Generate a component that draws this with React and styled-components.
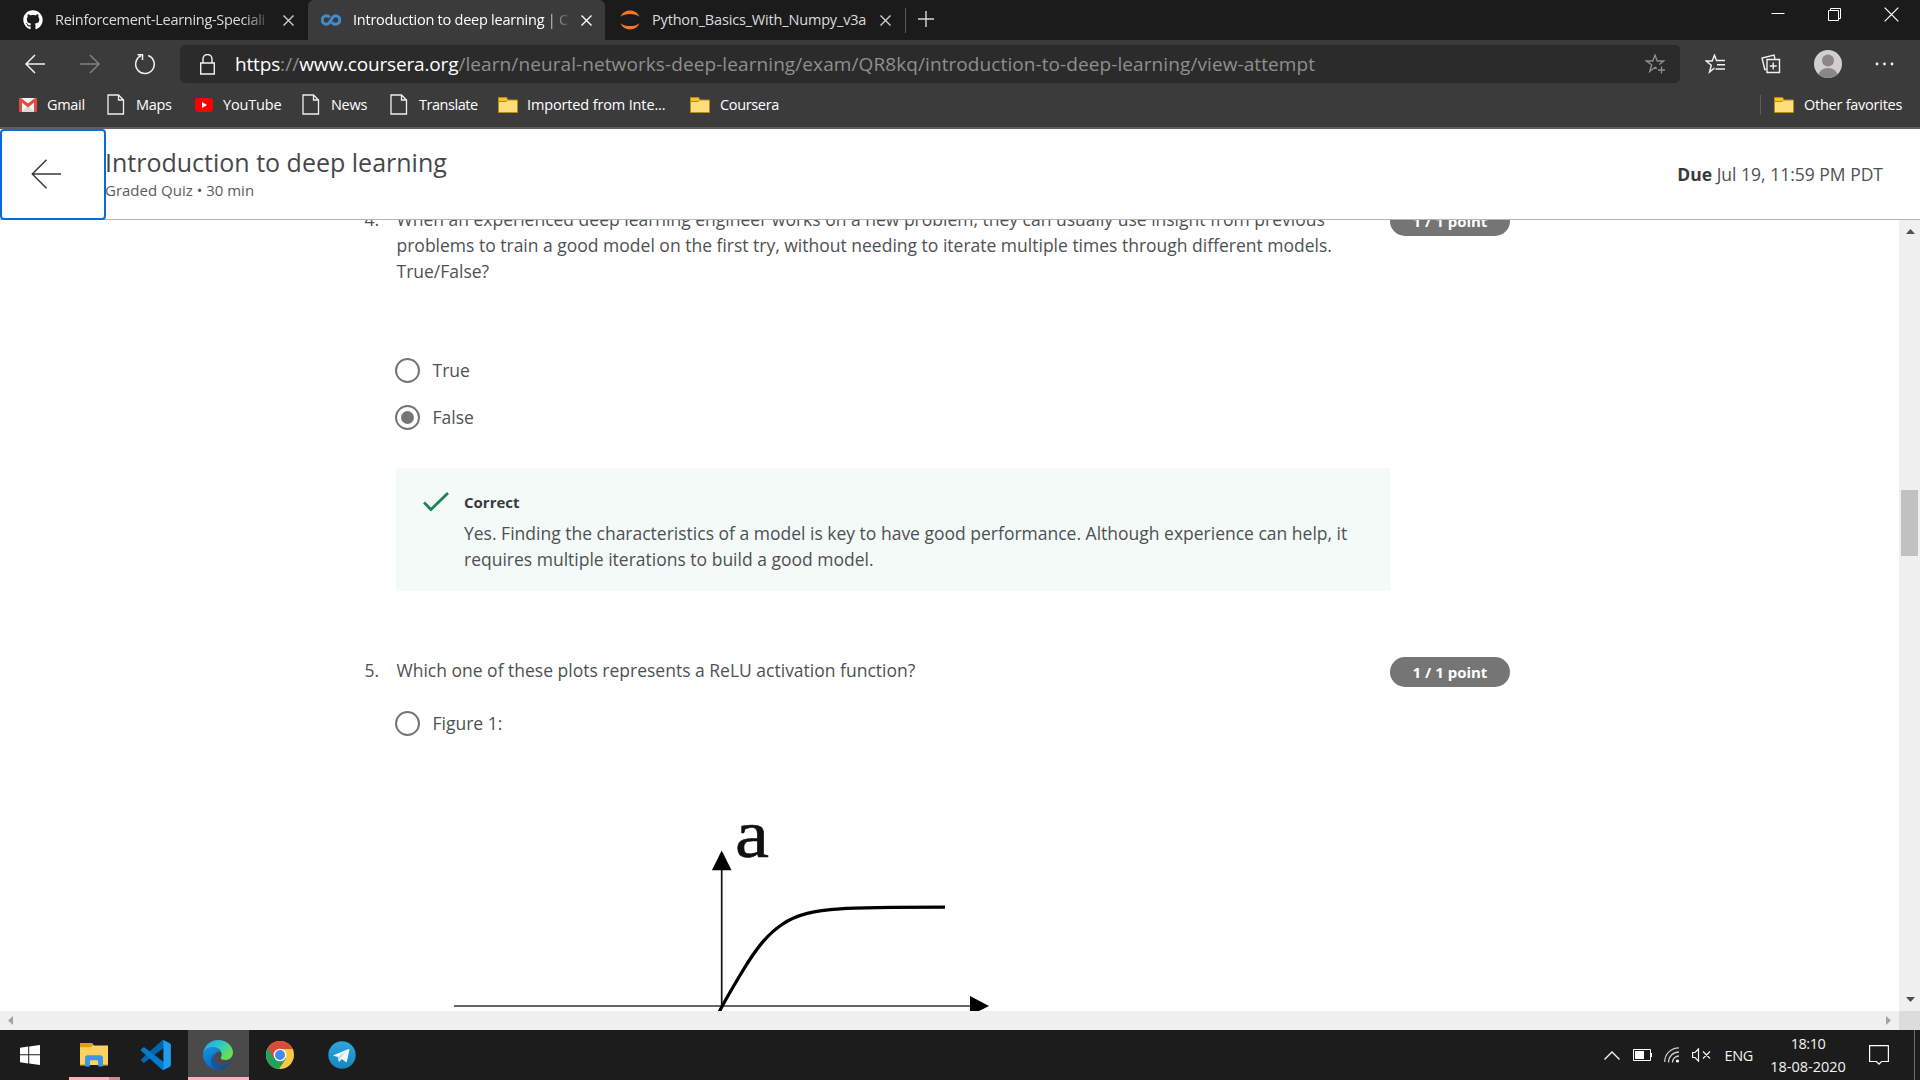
import React from "react";
import styled, { createGlobalStyle } from "styled-components";
import { FaGithub } from "react-icons/fa";

const ui = `"Open Sans", "Noto Sans", sans-serif`;
const page = `"Open Sans", "Noto Sans", sans-serif`;

const Global = createGlobalStyle`
  * { box-sizing: border-box; }
  html, body { margin: 0; padding: 0; overflow: hidden; background: #1c1c1c; }
  svg { display: block; flex: none; }
`;

const Screen = styled.div`
  width: 1920px;
  height: 1080px;
  display: flex;
  flex-direction: column;
  overflow: hidden;
  font-family: ${ui};
  background: #fff;
`;

/* ---------- browser chrome ---------- */
const TabStrip = styled.div`
  height: 40px;
  flex: none;
  display: flex;
  background: #1b1b1b;
`;
const TabBox = styled.div`
  width: ${(p) => p.$w}px;
  height: 40px;
  padding-left: ${(p) => p.$pad}px;
  display: flex;
  align-items: center;
  flex: none;
  background: ${(p) => (p.$active ? "#3b3b3b" : "#1b1b1b")};
  border-radius: ${(p) => (p.$active ? "6px 6px 0 0" : "0")};
`;
const Favicon = styled.div`
  width: 20px;
  margin-right: ${(p) => p.$gap || 12}px;
  flex: none;
`;
const TabTitle = styled.div`
  width: ${(p) => p.$w}px;
  flex: none;
  overflow: hidden;
  white-space: nowrap;
  font-size: 14.5px;
  line-height: 40px;
  height: 40px;
  letter-spacing: ${(p) => p.$ls}px;
  color: ${(p) => (p.$active ? "#fff" : "#dcdcdc")};
  mask-image: ${(p) => (p.$fade ? "linear-gradient(90deg, #000 calc(100% - 30px), transparent)" : "none")};
`;
const TabClose = styled.div`
  margin-left: ${(p) => p.$ml}px;
`;
const StripDivider = styled.div`
  width: 1px;
  height: 25px;
  margin-top: 8px;
  background: #5a5a5a;
`;
const NewTab = styled.div`
  margin: 10px 0 0 11px;
`;
const WindowButtons = styled.div`
  margin-left: auto;
  padding: 7px 21px 0 0;
  display: flex;
  gap: 42px;
`;
const MinimizeSlot = styled.div`
  margin-right: 1px;
`;

const Toolbar = styled.div`
  height: 48px;
  flex: none;
  display: flex;
  align-items: center;
  background: #3b3b3b;
`;
const NavButtons = styled.div`
  width: 180px;
  padding-left: 25px;
  display: flex;
  align-items: center;
  gap: 35px;
`;
const AddressBar = styled.div`
  width: 1500px;
  height: 38px;
  padding: 0 14px 0 20px;
  border-radius: 5px;
  background: #2b2b2b;
  display: flex;
  align-items: center;
`;
const Url = styled.div`
  margin-left: 20px;
  flex: 1;
  font-size: 19px;
  line-height: 38px;
  height: 38px;
  letter-spacing: ${(p) => p.$ls}px;
  color: #8f8f8f;
  white-space: nowrap;
`;
const UrlStrong = styled.span`
  color: #fff;
  letter-spacing: -0.16px;
`;
const ToolIcons = styled.div`
  padding-left: 25px;
  display: flex;
  align-items: center;
`;
const ToolIcon = styled.div`
  margin-right: ${(p) => p.$mr}px;
`;

const Favorites = styled.div`
  height: 41px;
  flex: none;
  padding: 0 17px 6px 19px;
  display: flex;
  align-items: center;
  background: #3b3b3b;
  border-bottom: 2px solid #5f5f5f;
`;
const Favorite = styled.div`
  display: flex;
  align-items: center;
  width: ${(p) => p.$w}px;
  flex: none;
`;
const FavIcon = styled.div`
  width: ${(p) => p.$w}px;
  flex: none;
`;
const FavLabel = styled.div`
  font-size: 14.5px;
  line-height: 20px;
  white-space: nowrap;
  color: #fff;
  letter-spacing: ${(p) => p.$ls}px;
`;
const FavDivider = styled.div`
  width: 1px;
  height: 20px;
  margin: 0 13px 0 auto;
  background: #5d5d5d;
`;

/* ---------- quiz header ---------- */
const QuizHeader = styled.header`
  height: 91px;
  flex: none;
  display: flex;
  background: #fff;
  border-bottom: 1px solid #b5b5b5;
  font-family: ${page};
`;
const BackButton = styled.div`
  width: 106px;
  height: 91px;
  flex: none;
  border: 2px solid #0b6bd8;
  border-radius: 4px;
  display: flex;
  align-items: center;
  padding: 0 0 1px 29px;
`;
const QuizTitles = styled.div`
  padding-top: 16px;
  margin-left: -1px;
`;
const QuizTitle = styled.div`
  font-size: 25px;
  line-height: 34px;
  color: #45484a;
  letter-spacing: ${(p) => p.$ls}px;
`;
const QuizMeta = styled.div`
  margin-top: 1px;
  font-size: 15px;
  line-height: 20px;
  color: #5c5c5c;
  letter-spacing: ${(p) => p.$ls}px;
`;
const Due = styled.div`
  margin-left: auto;
  padding-right: 37px;
  font-size: 17.5px;
  line-height: 90px;
  color: #4e5153;
  letter-spacing: ${(p) => p.$ls}px;
`;
const DueStrong = styled.b`
  color: #373a3c;
`;

/* ---------- quiz body ---------- */
const Viewport = styled.div`
  height: 791px;
  flex: none;
  display: flex;
`;
const Scroll = styled.main`
  width: 1899px;
  height: 791px;
  overflow: hidden;
  font-family: ${page};
  font-size: 17.5px;
  line-height: 26px;
  color: #4e5153;
`;
const Question = styled.section`
  margin-top: ${(p) => p.$mt}px;
  padding-left: 364.5px;
  display: flex;
`;
const QNumber = styled.div`
  width: 32px;
  flex: none;
`;
const QBody = styled.div`
  width: 993.5px;
  flex: none;
`;
const Line = styled.div`
  white-space: nowrap;
`;
const Badge = styled.div`
  width: 120px;
  height: 30px;
  border-radius: 15px;
  background: #757575;
  color: #fff;
  font-weight: 700;
  font-size: 15px;
  line-height: 31px;
  text-align: center;
`;
const Option = styled.div`
  height: 26px;
  margin-top: ${(p) => p.$mt}px;
  display: flex;
  align-items: center;
`;
const Radio = styled.div`
  width: 25px;
  height: 25px;
  margin: 1px 12.5px 0 -1.5px;
  border: 2px solid #757575;
  border-radius: 50%;
  display: flex;
  align-items: center;
  justify-content: center;
`;
const RadioDot = styled.div`
  width: 13px;
  height: 13px;
  border-radius: 50%;
  background: #757575;
`;
const Feedback = styled.div`
  width: 994px;
  height: 123px;
  margin: 38px 0 0 -0.5px;
  padding: 20px 27px;
  background: #f4faf8;
  display: flex;
`;
const CheckSlot = styled.div`
  width: 41px;
  flex: none;
  padding-top: 4px;
`;
const Verdict = styled.div`
  font-size: 15px;
  line-height: 28px;
  font-weight: 700;
  color: #373a3c;
  margin-bottom: 4px;
`;
const Figure = styled.div`
  margin: 75px 0 0 43.5px;
`;

const VBar = styled.div`
  width: 21px;
  height: 791px;
  padding: 9px 1px 9px 2px;
  background: #f0f0f0;
  display: flex;
  flex-direction: column;
  align-items: center;
`;
const VThumb = styled.div`
  width: 17px;
  height: 66px;
  margin: 256px 0 auto -1px;
  background: #c1c1c1;
`;
const HBar = styled.div`
  height: 19px;
  flex: none;
  background: #f0f0f0;
  display: flex;
  align-items: center;
  padding-left: 8px;
`;
const HRight = styled.div`
  margin-left: auto;
  margin-right: 8px;
`;
const Corner = styled.div`
  width: 21px;
  height: 19px;
  background: #dcdcdc;
`;

/* ---------- taskbar ---------- */
const Taskbar = styled.div`
  height: 50px;
  flex: none;
  display: flex;
  background: #1c1c1c;
`;
const TaskItem = styled.div`
  width: ${(p) => p.$w}px;
  height: 50px;
  flex: none;
  display: flex;
  flex-direction: column;
  align-items: center;
  background: ${(p) => (p.$active ? "#4a4a4a" : "transparent")};
`;
const AppIcon = styled.div`
  height: 47px;
  display: flex;
  align-items: center;
  padding-top: 3px;
  margin-left: ${(p) => p.$shift || 0}px;
`;
const Underline = styled.div`
  width: ${(p) => p.$w}px;
  height: 3px;
  background: #ffb0b8;
  border-right: ${(p) => (p.$stacked ? "11px solid #c98d93" : "0")};
`;
const Tray = styled.div`
  margin-left: auto;
  display: flex;
  align-items: center;
`;
const TrayItem = styled.div`
  margin-right: ${(p) => p.$mr}px;
`;
const TrayText = styled.div`
  color: #f2f2f2;
  font-size: 14.5px;
  line-height: 23px;
  text-align: center;
  white-space: nowrap;
  letter-spacing: ${(p) => p.$ls}px;
`;
const Clock = styled.div`
  width: 80px;
  margin-right: 21px;
`;
const DesktopEdge = styled.div`
  width: 6px;
  height: 50px;
  border-left: 1px solid #6b6b6b;
`;

/* ---------- drawings ---------- */
const Cross = ({ size = 11, color = "#d8d8d8", sw = 1.4 }) => (
  <svg width={size} height={size} viewBox="0 0 11 11" fill="none" stroke={color} strokeWidth={sw}>
    <path d="M.5.5l10 10M10.5.5l-10 10" />
  </svg>
);
const FileIcon = () => (
  <svg width="18" height="21" viewBox="0 0 18 21" fill="none" stroke="#f0f0f0" strokeWidth="1.3">
    <path d="M1 1h10.5l5 5V20H1zM11.5 1v5h5" />
  </svg>
);
const FolderIcon = () => (
  <svg width="20" height="16" viewBox="0 0 20 16">
    <path d="M.5.5h8l1.5 2.5h9.500v12.500H.5z" fill="#ffdc7c" stroke="#b98b0e" />
    <path d="M1 1h7.200l1 2-1 1.500H1z" fill="#f7c325" />
    <path d="M.5 4.500h7.700l1.300-1.500" fill="none" stroke="#b98b0e" />
  </svg>
);
const GmailIcon = () => (
  <svg width="18" height="14" viewBox="0 0 18 14">
    <rect width="18" height="14" rx="1.500" fill="#f2f2f2" />
    <path d="M2 14l7-6 7 6z" fill="#d9d9d9" />
    <path d="M0 1.500V14h3V4.500l6 5 6-5V14h3V1.500C18 .2 16.600-.4 15.500.5L9 5.600 2.500.5C1.400-.4 0 .2 0 1.500z" fill="#e04a3f" />
  </svg>
);
const YoutubeIcon = () => (
  <svg width="18" height="14" viewBox="0 0 18 14">
    <rect width="18" height="14" rx="3" fill="#f00" />
    <path d="M7 4l5 3-5 3z" fill="#fff" />
  </svg>
);
const CourseraIcon = () => (
  <svg width="20" height="12" viewBox="0 0 20 12" fill="none" stroke="#3f8ccf" strokeWidth="3">
    <path d="M8.600 3.300C7.800 2.200 6.700 1.700 5.500 1.700a4.300 4.300 0 0 0 0 8.600c4.500 0 4.600-8.600 9-8.600a4.300 4.300 0 0 1 0 8.600c-1.700 0-2.900-1-3.600-2.300" />
  </svg>
);
const JupyterIcon = () => (
  <svg width="20" height="20" viewBox="0 0 20 20" fill="#f37726">
    <path d="M.6 6.800C2 3 5.500.6 10 .6s8 2.400 9.400 6.200C17 4.800 13.800 3.900 10 3.900S3 4.800.6 6.800z" />
    <path d="M.6 13.200C2 17 5.500 19.400 10 19.400s8-2.400 9.400-6.200c-2.400 2-5.600 2.900-9.400 2.900s-7-.9-9.400-2.900z" />
  </svg>
);
const Arrow = ({ flip, color }) => (
  <svg width="20" height="20" viewBox="0 0 20 20" fill="none" stroke={color} strokeWidth="1.500">
    <path d={flip ? "M0 10h19M10 1l9 9-9 9" : "M20 10H1M10 1L1 10l9 9"} />
  </svg>
);
const Refresh = () => (
  <svg width="20" height="22" viewBox="0 0 20 22" fill="none" stroke="#f2f2f2" strokeWidth="1.500">
    <path d="M13.200 2.500A9.300 9.300 0 1 1 6 2.800M2.500 1.800h5V7" />
  </svg>
);
const Lock = () => (
  <svg width="15" height="21" viewBox="0 0 15 21" fill="none" stroke="#f2f2f2" strokeWidth="1.400">
    <path d="M.7 9h13.600v11H.7zM3 9V5a4.500 4.500 0 0 1 9 0v4" />
  </svg>
);
const StarPlus = () => (
  <svg width="21" height="20" viewBox="0 0 21 20" fill="none" stroke="#8f8f8f" strokeWidth="1.300">
    <path d="M12 14.500l-2-1.300-5.300 4.300 2-6.700L1.200 7h6.600L10 1l2.200 6h6.600l-4.500 3.500M16.500 12.500v7M13 16h7" />
  </svg>
);
const StarList = () => (
  <svg width="20" height="20" viewBox="0 0 20 20" fill="none" stroke="#f2f2f2" strokeWidth="1.400">
    <path d="M9.500 14l-5 4 1.800-6.700L1.200 7h6L9.500 1l2 5.500H20M12 10.700h8M10.500 15H20" />
  </svg>
);
const Collections = () => (
  <svg width="20" height="20" viewBox="0 0 20 20" fill="none" stroke="#f2f2f2" strokeWidth="1.400">
    <path d="M6 5.500h12.500V18.500H6zM12.200 8.500v7M8.700 12h7" />
    <path d="M5.500 15.500H3.800L1 4l12-3 1 4" />
  </svg>
);
const Avatar = () => (
  <svg width="28" height="28" viewBox="0 0 28 28">
    <defs>
      <clipPath id="avatar"><circle cx="14" cy="14" r="14" /></clipPath>
    </defs>
    <g clipPath="url(#avatar)">
      <rect width="28" height="28" fill="#d2d0ce" />
      <circle cx="14" cy="10.500" r="6" fill="#8a8886" />
      <ellipse cx="14" cy="26.500" rx="10" ry="8.500" fill="#8a8886" />
    </g>
  </svg>
);
const Triangle = ({ d, w, h, color }) => (
  <svg width={w} height={h} viewBox={`0 0 ${w} ${h}`}><path d={d} fill={color} /></svg>
);
const ActivationPlot = () => (
  <svg width="560" height="200" viewBox="440 811 560 200">
    <path d="M454 1006H972" stroke="#666" strokeWidth="2.200" />
    <path d="M721.700 1006V868" stroke="#111" strokeWidth="1.700" />
    <path d="M721.700 850.500l9.800 19.800h-19.600z" fill="#000" />
    <path d="M970 996l19 10-19 9.500z" fill="#000" />
    <path d="M719.200 1012C724 1002 733 987 742 972C757 947 768 934 782 924.500C797 914 815 910.500 840 908.800C862 907.300 895 907.200 945 907.200" fill="none" stroke="#000" strokeWidth="3.300" />
    <text x="735" y="857" fontFamily="'Liberation Serif', serif" fontSize="67" textLength="34" lengthAdjust="spacingAndGlyphs" stroke="#111" strokeWidth=".6" fill="#111">a</text>
  </svg>
);

const Explorer = () => (
  <svg width="28" height="24" viewBox="0 0 28 24">
    <path d="M0 0h12l2 2.500h14V22H0z" fill="#ffd25f" />
    <path d="M0 0h11.500l1.700 2-2 2.200H0z" fill="#e39c0c" />
    <path d="M5 23.500V15c0-1.700 1-2.700 2.500-2.700h13c1.500 0 2.500 1 2.500 2.700v8.500h-5V18.500c0-.8-.5-1.200-1.200-1.200h-5.600c-.7 0-1.200.4-1.200 1.200v5z" fill="#3b97e3" />
    <path d="M0 21h5v1.500H0zM23 21h5v1.500h-5z" fill="#e9b43d" />
  </svg>
);
const VsCode = () => (
  <svg width="30" height="30" viewBox="0 0 100 100">
    <path d="M96 11L75.500 1.200a6 6 0 0 0-7 1.200L1.400 63.600a4 4 0 0 0 0 6l5.500 5a4 4 0 0 0 5.300.2L93 13.500c2.700-2 6.600-.1 6.600 3.300v-.2A6 6 0 0 0 96 11z" fill="#0065a9" />
    <path d="M96 89l-20.500 9.800a6 6 0 0 1-7-1.200L1.400 36.400a4 4 0 0 1 0-6l5.500-5a4 4 0 0 1 5.300-.2L93 86.500c2.700 2 6.600.1 6.600-3.300v.2A6 6 0 0 1 96 89z" fill="#007acc" />
    <path d="M75.500 98.800a6 6 0 0 1-7-1.200c2.300 2.300 6.200.7 6.200-2.500V4.900c0-3.200-3.900-4.800-6.200-2.500a6 6 0 0 1 7-1.200L96 11a6 6 0 0 1 3.600 5.600v66.800A6 6 0 0 1 96 89z" fill="#1f9cf0" />
  </svg>
);
const Edge = () => (
  <svg width="30" height="30" viewBox="0 0 30 30">
    <defs>
      <linearGradient id="eg1" x1="0" y1="0" x2="1" y2=".6">
        <stop offset="0" stopColor="#1fa7e0" /><stop offset=".5" stopColor="#2fc7c9" /><stop offset="1" stopColor="#6be04a" />
      </linearGradient>
      <linearGradient id="eg2" x1="0" y1="0" x2=".4" y2="1">
        <stop offset="0" stopColor="#1795dc" /><stop offset="1" stopColor="#0a66c4" />
      </linearGradient>
      <linearGradient id="eg3" x1="0" y1="0" x2="1" y2="0">
        <stop offset="0" stopColor="#0f5cae" /><stop offset="1" stopColor="#114a8b" />
      </linearGradient>
    </defs>
    <path d="M.3 13C1.300 5.500 7.500 0 15 0c8.500 0 15 6 15 12.500 0 4.500-3.500 7.500-7.500 7.500-3 0-4.800-1-4.800-2 0-.8 1-1.200 1-3.500 0-3.500-3.500-6-8-6C6 8.500 2 10.500.3 13z" fill="url(#eg1)" />
    <path d="M0 15c0-4.500 4-8 9.500-8 4.500 0 8 2 9 5-2.500-1.500-7 .5-7.500 5C10 23 15 29 20.500 28.500A15 15 0 0 1 0 15z" fill="url(#eg2)" />
    <path d="M12 13.500c-1 1.500-1.500 3.500-1 6 .8 3.500 5 6.500 9.500 5.800 3-.4 5.800-2.800 7-4.300.6-.7 1-.3.700.5C26 26.500 20.500 30 15 30 10.500 29 8 25 8 21c0-3.500 1.800-6.200 4-7.500z" fill="url(#eg3)" />
  </svg>
);
const Chrome = () => (
  <svg width="28" height="28" viewBox="0 0 28 28">
    <circle cx="14" cy="14" r="14" fill="#fbc940" />
    <path d="M14 14L1.900 7A14 14 0 0 0 13 28l7-10.500z" fill="#1fa160" />
    <path d="M1.900 7A14 14 0 0 1 26.600 8H14L8 17.500z" fill="#db4a3c" />
    <circle cx="14" cy="14" r="6.300" fill="#fff" />
    <circle cx="14" cy="14" r="5" fill="#4a86ee" />
  </svg>
);
const Telegram = () => (
  <svg width="28" height="28" viewBox="0 0 28 28">
    <defs>
      <linearGradient id="tg" x1="0" y1="0" x2="0" y2="1"><stop offset="0" stopColor="#2ea6df" /><stop offset="1" stopColor="#1586bf" /></linearGradient>
    </defs>
    <circle cx="14" cy="14" r="13.700" fill="url(#tg)" />
    <path d="M5.500 14.200L20.500 8c.6-.2 1 .1.900.8L19 20.300c-.2.800-.7 1-1.300.6l-3.900-3-2.200 2.500c-.5.400-1 .1-1-.5l-.7-4-4.200-1.200c-.6-.1-.6-.3-.2-.5z" fill="#f2f7fa" />
    <path d="M10 16l8.500-5.700-6.600 7-.5 3z" fill="#bcd7e6" />
  </svg>
);

const Tab = ({ w, pad, active, icon, title, titleW, ls, fade, gap, closeGap }) => (
  <TabBox $w={w} $pad={pad} $active={active}>
    <Favicon $gap={gap}>{icon}</Favicon>
    <TabTitle $w={titleW} $ls={ls} $active={active} $fade={fade}>{title}</TabTitle>
    <TabClose $ml={closeGap}><Cross color={active ? "#fff" : "#d0d0d0"} /></TabClose>
  </TabBox>
);

const favorites = [
  { icon: <GmailIcon />, iconW: 28, label: "Gmail", w: 88, ls: -0.3 },
  { icon: <FileIcon />, iconW: 29, label: "Maps", w: 88, ls: -0.3 },
  { icon: <YoutubeIcon />, iconW: 28, label: "YouTube", w: 107, ls: -0.15 },
  { icon: <FileIcon />, iconW: 29, label: "News", w: 88, ls: -0.3 },
  { icon: <FileIcon />, iconW: 29, label: "Translate", w: 108, ls: -0.45 },
  { icon: <FolderIcon />, iconW: 29, label: "Imported from Inte...", w: 192, ls: -0.14 },
  { icon: <FolderIcon />, iconW: 30, label: "Coursera", w: 100, ls: -0.35 },
];

const Choice = ({ mt, checked, children }) => (
  <Option $mt={mt}>
    <Radio>{checked && <RadioDot />}</Radio>
    <Line>{children}</Line>
  </Option>
);

export default function App() {
  return (
    <Screen>
      <Global />
      <TabStrip>
        <Tab w={308} pad={23} icon={<FaGithub size={20} color="#fff" />} title="Reinforcement-Learning-Speciali" titleW={218} ls={-0.3} fade closeGap={10} />
        <Tab w={297} pad={13} active icon={<CourseraIcon />} title="Introduction to deep learning | C" titleW={219} ls={-0.24} fade closeGap={9} />
        <Tab w={300} pad={15} icon={<JupyterIcon />} title="Python_Basics_With_Numpy_v3a" titleW={219} ls={-0.17} closeGap={9} />
        <StripDivider />
        <NewTab>
          <svg width="18" height="18" viewBox="0 0 18 18" stroke="#d8d8d8" strokeWidth="1.400"><path d="M9 1v16M1 9h16" /></svg>
        </NewTab>
        <WindowButtons>
          <MinimizeSlot>
            <svg width="14" height="14" viewBox="0 0 14 14" stroke="#fff"><path d="M.5 6.500h13" /></svg>
          </MinimizeSlot>
          <svg width="14" height="15" viewBox="0 0 14 15" fill="none" stroke="#fff"><path d="M.5 3.500h10v10H.5zM2.500 3.500v-2h10v10h-2" /></svg>
          <Cross size={15} color="#fff" sw={0.9} />
        </WindowButtons>
      </TabStrip>
      <Toolbar>
        <NavButtons>
          <Arrow color="#f2f2f2" />
          <Arrow flip color="#808080" />
          <Refresh />
        </NavButtons>
        <AddressBar>
          <Lock />
          <Url $ls={0.09}>
            <UrlStrong>https</UrlStrong>://<UrlStrong>www.coursera.org</UrlStrong>/learn/neural-networks-deep-learning/exam/QR8kq/introduction-to-deep-learning/view-attempt
          </Url>
          <StarPlus />
        </AddressBar>
        <ToolIcons>
          <ToolIcon $mr={36}><StarList /></ToolIcon>
          <ToolIcon $mr={33}><Collections /></ToolIcon>
          <ToolIcon $mr={33}><Avatar /></ToolIcon>
          <svg width="20" height="4" viewBox="0 0 20 4" fill="#f2f2f2"><circle cx="2" cy="2" r="1.400" /><circle cx="9.500" cy="2" r="1.400" /><circle cx="17" cy="2" r="1.400" /></svg>
        </ToolIcons>
      </Toolbar>
      <Favorites>
        {favorites.map((f) => (
          <Favorite key={f.label} $w={f.w}>
            <FavIcon $w={f.iconW}>{f.icon}</FavIcon>
            <FavLabel $ls={f.ls}>{f.label}</FavLabel>
          </Favorite>
        ))}
        <FavDivider />
        <Favorite $w={129}>
          <FavIcon $w={30}><FolderIcon /></FavIcon>
          <FavLabel $ls={-0.25}>Other favorites</FavLabel>
        </Favorite>
      </Favorites>

      <QuizHeader>
        <BackButton>
          <svg width="30" height="30" viewBox="0 0 30 30" fill="none" stroke="#373a3c" strokeWidth="1.500"><path d="M30 15H1.500M15.500 .8L1.300 15l14.200 14.200" /></svg>
        </BackButton>
        <QuizTitles>
          <QuizTitle $ls={0}>Introduction to deep learning</QuizTitle>
          <QuizMeta $ls={0}>Graded Quiz • 30 min</QuizMeta>
        </QuizTitles>
        <Due $ls={0}><DueStrong>Due</DueStrong> Jul 19, 11:59 PM PDT</Due>
      </QuizHeader>

      <Viewport>
        <Scroll>
          <Question $mt={-14}>
            <QNumber>4.</QNumber>
            <QBody>
              <Line>When an experienced deep learning engineer works on a new problem, they can usually use insight from previous</Line>
              <Line>problems to train a good model on the first try, without needing to iterate multiple times through different models.</Line>
              <Line>True/False?</Line>
              <Choice mt={73}>True</Choice>
              <Choice mt={21} checked>False</Choice>
              <Feedback>
                <CheckSlot>
                  <svg width="26" height="20" viewBox="0 0 26 20" fill="none" stroke="#1d8354" strokeWidth="2.800"><path d="M1 10.500l7 7L25 1" /></svg>
                </CheckSlot>
                <div>
                  <Verdict>Correct</Verdict>
                  <Line>Yes. Finding the characteristics of a model is key to have good performance. Although experience can help, it</Line>
                  <Line>requires multiple iterations to build a good model.</Line>
                </div>
              </Feedback>
            </QBody>
            <Badge>1 / 1 point</Badge>
          </Question>
          <Question $mt={66}>
            <QNumber>5.</QNumber>
            <QBody>
              <Line>Which one of these plots represents a ReLU activation function?</Line>
              <Choice mt={27}>Figure 1:</Choice>
              <Figure><ActivationPlot /></Figure>
            </QBody>
            <Badge>1 / 1 point</Badge>
          </Question>
        </Scroll>
        <VBar>
          <Triangle w={9} h={5} d="M0 5L4.500 0 9 5z" color="#505050" />
          <VThumb />
          <Triangle w={9} h={5} d="M0 0l4.500 5L9 0z" color="#505050" />
        </VBar>
      </Viewport>
      <HBar>
        <Triangle w={5} h={9} d="M5 0L0 4.500 5 9z" color="#a3a3a3" />
        <HRight><Triangle w={5} h={9} d="M0 0l5 4.500L0 9z" color="#a3a3a3" /></HRight>
        <Corner />
      </HBar>

      <Taskbar>
        <TaskItem $w={64}>
          <AppIcon $shift={-4}>
            <svg width="20" height="20" viewBox="0 0 20 20" fill="#fff"><path d="M0 2.700L8.200 1.500v7.800H0zM9.200 1.400L20 0v9.300H9.200zM0 10.300h8.200v8.200L0 17.300zM9.200 10.300H20V20L9.200 18.600z" /></svg>
          </AppIcon>
        </TaskItem>
        <TaskItem $w={61}><AppIcon $shift={-2}><Explorer /></AppIcon><Underline $w={51} $stacked /></TaskItem>
        <TaskItem $w={63}><AppIcon $shift={-1}><VsCode /></AppIcon></TaskItem>
        <TaskItem $w={61} $active><AppIcon $shift={-1}><Edge /></AppIcon><Underline $w={61} /></TaskItem>
        <TaskItem $w={61}><AppIcon><Chrome /></AppIcon></TaskItem>
        <TaskItem $w={63}><AppIcon><Telegram /></AppIcon></TaskItem>
        <Tray>
          <TrayItem $mr={13}>
            <svg width="16" height="9" viewBox="0 0 16 9" fill="none" stroke="#f2f2f2" strokeWidth="1.400"><path d="M.5 8.500L8 1l7.500 7.500" /></svg>
          </TrayItem>
          <TrayItem $mr={12}>
            <svg width="19" height="12" viewBox="0 0 19 12"><path d="M.5.5h17v11H.5zM18.500 4v4" fill="none" stroke="#fff" /><path d="M2 2h9v8H2z" fill="#fff" /></svg>
          </TrayItem>
          <TrayItem $mr={12}>
            <svg width="16" height="16" viewBox="0 0 16 16" fill="none" strokeWidth="1.300" stroke="#c8c8c8"><path d="M.7 15C.7 7 7 .8 15 .8M4.500 15.500c0-6 4.500-10.500 10.500-10.500M8.500 15.500C8.500 11.500 11.500 9 15 9" /><circle cx="13.500" cy="14" r="1.600" fill="#fff" stroke="none" /></svg>
          </TrayItem>
          <TrayItem $mr={13}>
            <svg width="19" height="14" viewBox="0 0 19 14" fill="none" strokeWidth="1.200" stroke="#f2f2f2"><path d="M.6 4.500h2.500L6.500.8v12.400L3.100 9.500H.6zM11 3.500l7 7M18 3.500l-7 7" /></svg>
          </TrayItem>
          <TrayItem $mr={15}><TrayText $ls={-0.3}>ENG</TrayText></TrayItem>
          <Clock>
            <TrayText $ls={-0.5}>18:10</TrayText>
            <TrayText $ls={0}>18-08-2020</TrayText>
          </Clock>
          <TrayItem $mr={25}>
            <svg width="20" height="21" viewBox="0 0 20 21" fill="none" stroke="#fff" strokeWidth="1.200"><path d="M.6.6h18.800v15.900h-6.900L10 19.200l-2.500-2.700H.6z" /></svg>
          </TrayItem>
          <DesktopEdge />
        </Tray>
      </Taskbar>
    </Screen>
  );
}
